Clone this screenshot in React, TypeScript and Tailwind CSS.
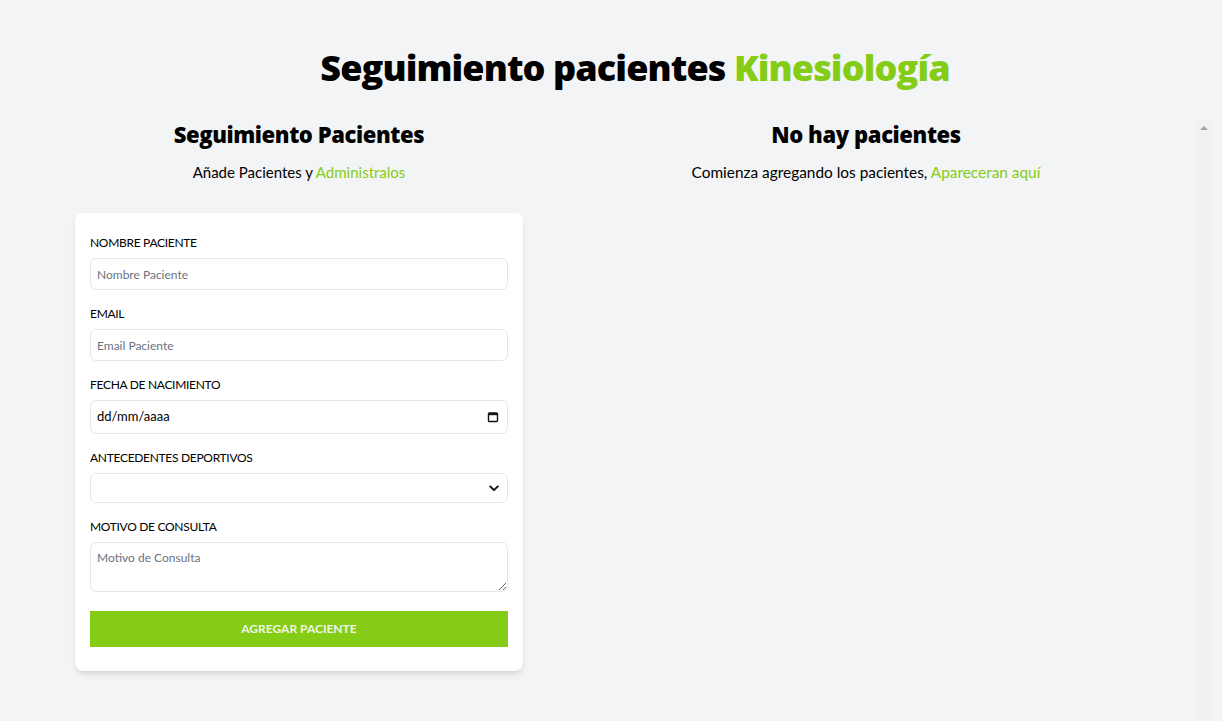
import React from "react";

function CalendarIcon() {
  return (
    <svg width="12" height="12" viewBox="0 0 12 12" fill="none">
      <rect x="1.5" y="2" width="9" height="8.5" rx="1" stroke="#111" strokeWidth="1.4" />
      <rect x="1.5" y="2" width="9" height="2.2" fill="#111" />
    </svg>
  );
}

function Chevron() {
  return (
    <svg width="10" height="7" viewBox="0 0 10 7" fill="none">
      <path d="M1.2 1.4 L5 5.2 L8.8 1.4" stroke="#111" strokeWidth="1.9" strokeLinecap="round" strokeLinejoin="round" />
    </svg>
  );
}

export default function App() {
  const body = { fontFamily: "Lato, 'Open Sans', sans-serif" };
  const heading = { fontFamily: "'Open Sans', Lato, sans-serif" };
  const labelCls = "block text-[12px] leading-[20px] tracking-[-0.3px] uppercase";
  const inputCls =
    "mt-[5px] block w-full rounded-md border border-[#e5e7eb] px-[6px] text-[12px] placeholder-[#6b7280] outline-none";
  return (
    <div className="min-h-[721px] bg-[#f3f4f6] text-black" style={body}>
      <h1
        className="pt-[48px] pl-[48px] text-center text-[36px] leading-[40px] font-extrabold tracking-[-0.9px]"
        style={heading}
      >
        Seguimiento pacientes <span className="text-[#84cc16]">Kinesiología</span>
      </h1>

      <div className="mt-[30px] flex pl-[75px] pr-[10px]">
        <div className="w-[448px] shrink-0">
          <h2
            className="text-center text-[22px] leading-[32px] font-extrabold tracking-[-0.4px]"
            style={heading}
          >
            Seguimiento Pacientes
          </h2>
          <p className="mt-[12px] text-center text-[15px] leading-[20px]">
            Añade Pacientes y <span className="text-[#84cc16]">Administralos</span>
          </p>

          <form className="mt-[31px] rounded-lg bg-white px-[15px] pt-[20px] pb-[24px] shadow-md">
            <div>
              <label className={labelCls}>Nombre Paciente</label>
              <input type="text" placeholder="Nombre Paciente" className={`${inputCls} h-[32px]`} />
            </div>
            <div className="mt-[14px]">
              <label className={labelCls}>Email</label>
              <input type="email" placeholder="Email Paciente" className={`${inputCls} h-[32px]`} />
            </div>
            <div className="mt-[14px]">
              <label className={labelCls}>Fecha de Nacimiento</label>
              <div className="mt-[5px] flex h-[34px] w-full items-center justify-between rounded-md border border-[#e5e7eb] pl-[6px] pr-[8px] text-[13px]">
                <span>dd/mm/aaaa</span>
                <CalendarIcon />
              </div>
            </div>
            <div className="mt-[14px]">
              <label className={labelCls}>Antecedentes Deportivos</label>
              <div className="mt-[5px] flex h-[30px] w-full items-center justify-end rounded-md border border-[#e5e7eb] pr-[8px]">
                <Chevron />
              </div>
            </div>
            <div className="mt-[14px]">
              <label className={labelCls}>Motivo de Consulta</label>
              <textarea placeholder="Motivo de Consulta" className={`${inputCls} h-[50px] py-[6px]`} />
            </div>
            <button
              type="button"
              className="mt-[19px] block h-[36px] w-full bg-[#84cc16] text-[12px] font-bold uppercase text-[#eef6e4]"
            >
              Agregar Paciente
            </button>
          </form>
        </div>

        <div className="ml-[14px] flex flex-1">
          <div className="flex-1">
            <h2
              className="text-center text-[22px] leading-[32px] font-extrabold tracking-[-0.4px]"
              style={heading}
            >
              No hay pacientes
            </h2>
            <p className="mt-[12px] text-center text-[15.4px] leading-[20px]">
              Comienza agregando los pacientes, <span className="text-[#84cc16]">Apareceran aquí</span>
            </p>
          </div>
          <div className="mt-[2px] flex h-[601px] w-[17px] justify-center bg-[#f1f1f1] pt-[6px]">
            <div className="h-0 w-0 border-x-[4px] border-b-[4px] border-x-transparent border-b-[#a3a3a3]" />
          </div>
        </div>
      </div>
    </div>
  );
}
